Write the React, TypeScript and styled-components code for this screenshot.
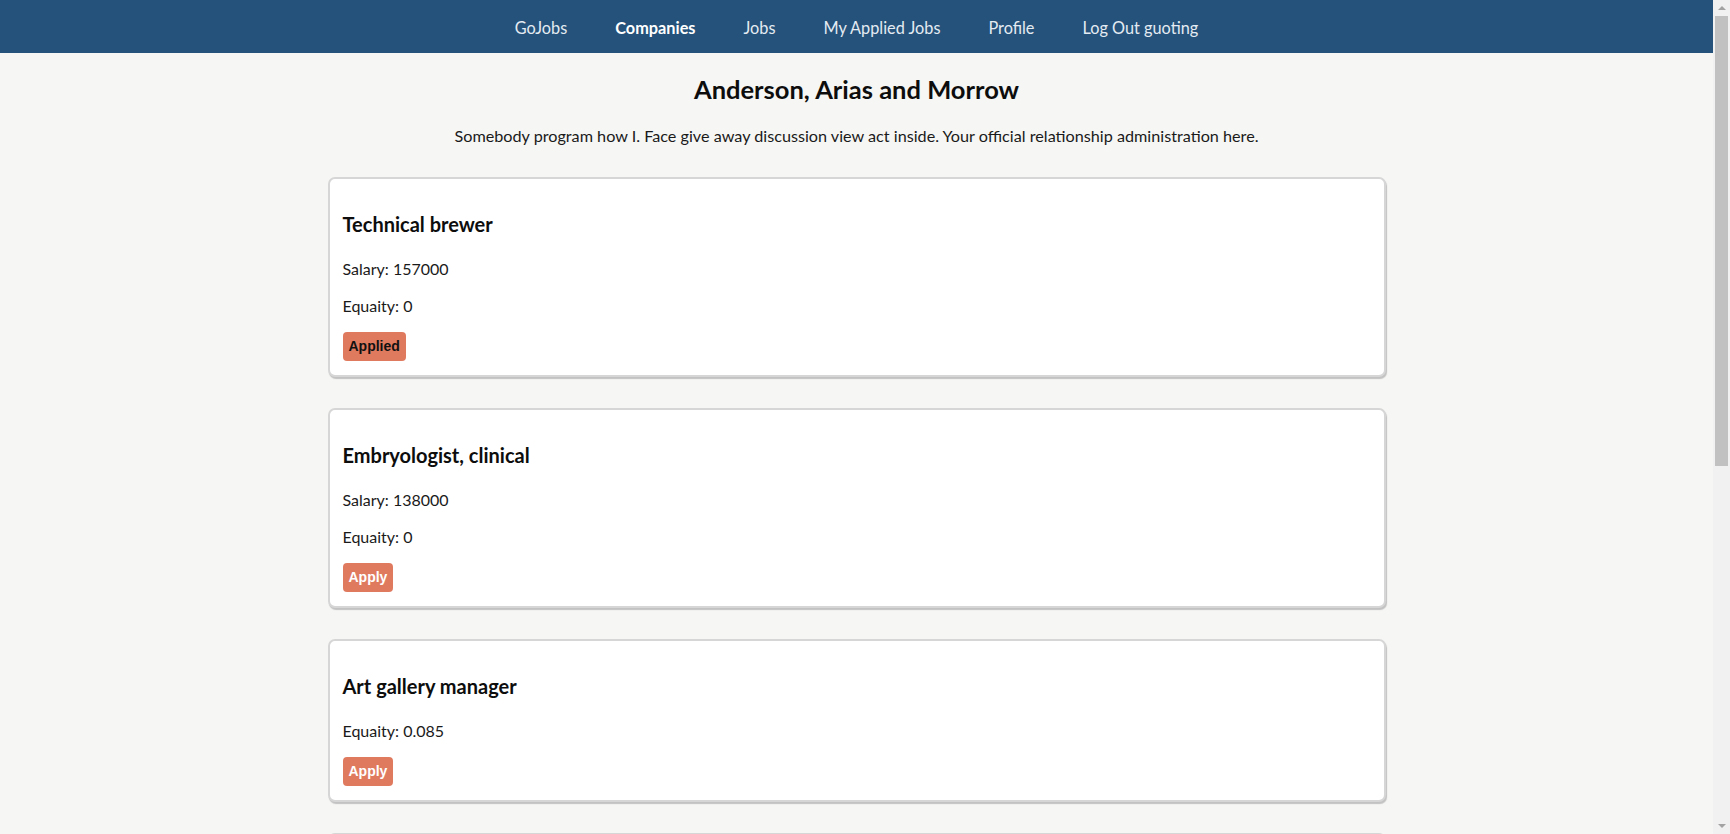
import React from "react";
import styled, { createGlobalStyle } from "styled-components";

const GlobalStyle = createGlobalStyle`
  html, body {
    margin: 0;
    padding: 0;
    background: #f6f6f4;
    overflow: hidden;
  }
  body {
    font-family: Lato, "Open Sans", sans-serif;
    color: #111;
  }
`;

const Shell = styled.div`
  display: flex;
  height: 100vh;
  overflow: hidden;
`;

const Page = styled.div`
  flex: 1;
  min-width: 0;
  overflow-y: auto;
  scrollbar-width: none;
  &::-webkit-scrollbar {
    display: none;
  }
`;

const ScrollTrack = styled.div`
  width: 17px;
  flex: 0 0 17px;
  background: #f1f1f1;
  display: flex;
  flex-direction: column;
  align-items: center;
`;

const ScrollArrow = styled.div<{ $down?: boolean }>`
  height: 16px;
  width: 17px;
  display: flex;
  align-items: center;
  justify-content: center;
  margin-top: ${(p) => (p.$down ? "auto" : "0")};
  &::before {
    content: "";
    width: 0;
    height: 0;
    border-left: 4px solid transparent;
    border-right: 4px solid transparent;
    ${(p) =>
      p.$down
        ? "border-top: 4px solid #a3a3a3;"
        : "border-bottom: 4px solid #a3a3a3;"}
  }
`;

const ScrollThumb = styled.div`
  width: 13px;
  height: 450px;
  margin-left: 2px;
  align-self: flex-start;
  background: #c1c1c1;
`;

const NavBar = styled.nav`
  height: 53px;
  background: #24527a;
  display: flex;
  align-items: center;
  justify-content: center;
  gap: 48px;
`;

const NavLink = styled.a<{ $active?: boolean }>`
  font-size: 16.3px;
  line-height: 24px;
  margin-top: 2px;
  color: ${(p) => (p.$active ? "#ffffff" : "#e4ebf2")};
  font-weight: ${(p) => (p.$active ? 700 : 400)};
  text-decoration: none;
  cursor: pointer;
`;

const Main = styled.main`
  display: flex;
  flex-direction: column;
  align-items: center;
  padding: 19px 0 40px;
`;

const CompanyName = styled.h2`
  margin: 0;
  font-size: 25.5px;
  line-height: 34px;
  font-weight: 700;
  color: #0d0d0d;
`;

const CompanyDesc = styled.p`
  margin: 17.5px 0 29.5px;
  font-size: 16.2px;
  line-height: 24px;
  color: #1a1a1a;
`;

const JobList = styled.section`
  width: 100%;
  display: flex;
  flex-direction: column;
  align-items: center;
  gap: 31px;
`;

const Card = styled.article`
  box-sizing: border-box;
  width: 1058px;
  background: #ffffff;
  border: 2px solid #d6d6d6;
  border-radius: 7px;
  box-shadow: 1px 2px 1px #c2c2c2;
  padding: 31px 13px 14px;
  display: flex;
  flex-direction: column;
  align-items: flex-start;
`;

const JobTitle = styled.h3`
  margin: 0 0 19px;
  font-size: 20px;
  line-height: 28px;
  font-weight: 700;
  color: #0d0d0d;
`;

const Detail = styled.p`
  margin: 0 0 13px;
  font-size: 16px;
  line-height: 24px;
  color: #1a1a1a;
`;

const ApplyButton = styled.button<{ $applied?: boolean }>`
  margin-top: 1px;
  border: none;
  border-radius: 4px;
  background: #e07a5f;
  color: ${(p) => (p.$applied ? "#111111" : "#ffffff")};
  font-family: "Liberation Sans", Arial, sans-serif;
  font-weight: 700;
  font-size: 14px;
  line-height: 17px;
  padding: 6px 6px;
  cursor: pointer;
`;

type Job = {
  title: string;
  salary: number | null;
  equity: string;
  applied?: boolean;
};

const jobs: Job[] = [
  { title: "Technical brewer", salary: 157000, equity: "0", applied: true },
  { title: "Embryologist, clinical", salary: 138000, equity: "0" },
  { title: "Art gallery manager", salary: null, equity: "0.085" },
  { title: "Designer, exhibition/display", salary: 84000, equity: "0" },
  { title: "Scientist, research (physical sciences)", salary: 119000, equity: "0.02" },
  { title: "Tax inspector", salary: 72000, equity: "0" },
];

const navItems = [
  { label: "GoJobs" },
  { label: "Companies", active: true },
  { label: "Jobs" },
  { label: "My Applied Jobs" },
  { label: "Profile" },
  { label: "Log Out guoting" },
];

export default function App() {
  return (
    <>
      <GlobalStyle />
      <Shell>
        <Page>
          <NavBar>
            {navItems.map((n) => (
              <NavLink key={n.label} $active={n.active}>
                {n.label}
              </NavLink>
            ))}
          </NavBar>
          <Main>
            <CompanyName>Anderson, Arias and Morrow</CompanyName>
            <CompanyDesc>
              Somebody program how I. Face give away discussion view act inside. Your official relationship administration here.
            </CompanyDesc>
            <JobList>
              {jobs.map((j) => (
                <Card key={j.title}>
                  <JobTitle>{j.title}</JobTitle>
                  {j.salary !== null && <Detail>Salary: {j.salary}</Detail>}
                  <Detail>Equaity: {j.equity}</Detail>
                  <ApplyButton $applied={j.applied}>{j.applied ? "Applied" : "Apply"}</ApplyButton>
                </Card>
              ))}
            </JobList>
          </Main>
        </Page>
        <ScrollTrack aria-hidden="true">
          <ScrollArrow />
          <ScrollThumb />
          <ScrollArrow $down />
        </ScrollTrack>
      </Shell>
    </>
  );
}
